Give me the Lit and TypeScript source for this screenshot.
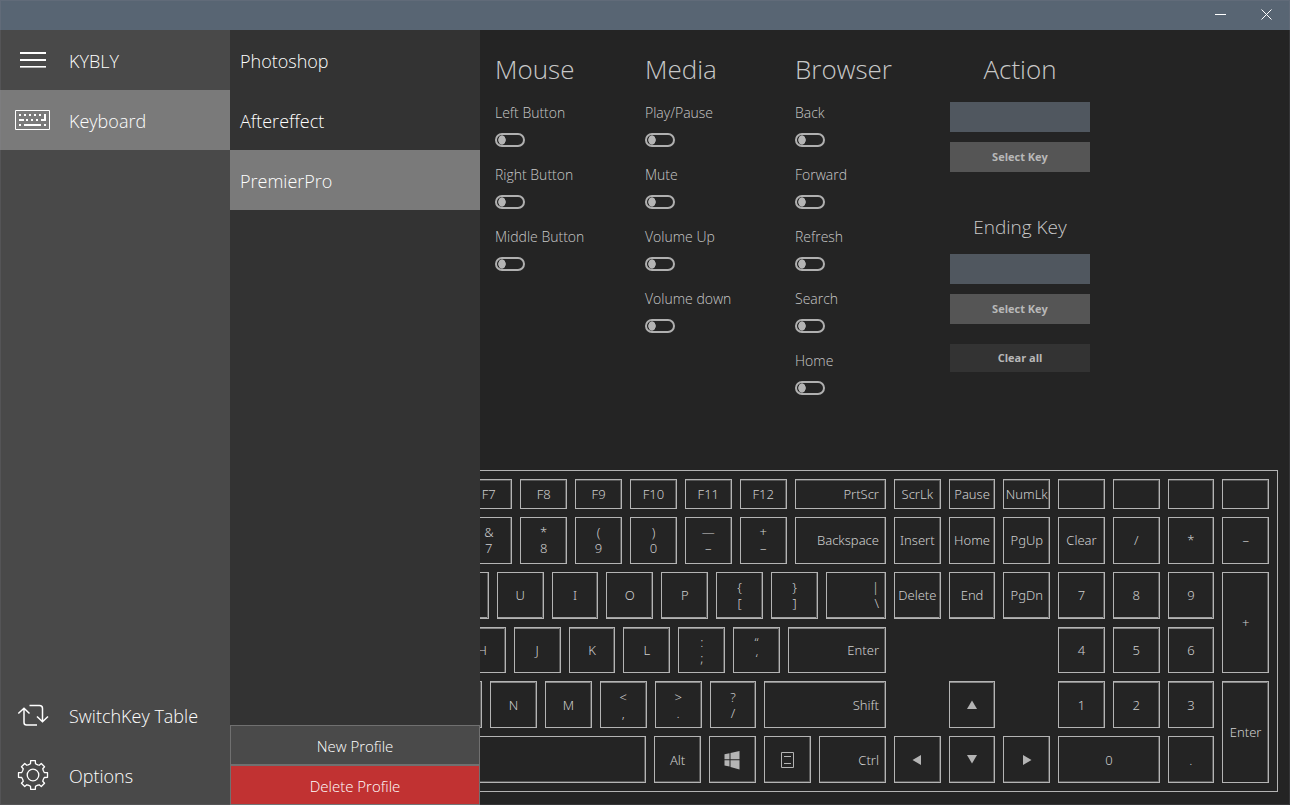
import { LitElement, html, css, svg, nothing, TemplateResult } from "lit";
import { customElement, property } from "lit/decorators.js";
import { classMap } from "lit/directives/class-map.js";
import { styleMap } from "lit/directives/style-map.js";

type Key = {
  id: string;
  top?: string;
  text?: string;
  icon?: TemplateResult;
  size?: number;
  end?: boolean;
};

const k = (text: string, size = 1, end = false): Key => ({ id: text, text, size, end });
const pair = (id: string, top: string, text: string, size = 1, end = false): Key => ({ id, top, text, size, end });
const blank = (id: string, size = 1): Key => ({ id, size });

const arrow = (points: string) => html`<svg width="12" height="12" viewBox="0 0 12 12" fill="currentColor" aria-hidden="true"><polygon points=${points} /></svg>`;
const UP = arrow("6,1.5 11,10 1,10");
const DOWN = arrow("1,1 11,1 6,9.5");
const LEFT = arrow("1.5,6 10,1 10,11");
const RIGHT = arrow("2,1 10.5,6 2,11");

const WINDOWS = html`<svg width="16" height="20" viewBox="0 0 16 20" fill="currentColor" aria-hidden="true">
  <path d="M0.500 4.300 5.500 3.200V9.300H0.500zM6.500 3 15.500 1V9.300H6.500zM0.500 10.300H5.500V16.500L0.500 15.500zM6.500 10.300H15.500V19.500L6.500 17z" />
</svg>`;
const MENU = html`<svg width="13" height="16" viewBox="0 0 13 16" fill="none" stroke="currentColor" aria-hidden="true">
  <path d="M.5 .5H12.500V15.500H.5zM3 4.500H10M3 11.500H10" />
</svg>`;

const MAIN_ROWS: { gap: number; keys: Key[] }[] = [
  { gap: 0.59, keys: [k("F7"), k("F8"), k("F9"), k("F10"), k("F11"), k("F12"), k("PrtScr", 1.81, true)] },
  {
    gap: 0.59,
    keys: [pair("7", "&", "7"), pair("8", "*", "8"), pair("9", "(", "9"), pair("0", ")", "0"), pair("minus", "—", "–"), pair("plus", "+", "–"), k("Backspace", 1.81, true)],
  },
  {
    gap: 0.16,
    keys: [blank("y"), k("U"), k("I"), k("O"), k("P"), pair("open", "{", "["), pair("close", "}", "]"), pair("slash", "|", "\\", 1.24, true)],
  },
  {
    gap: 0.47,
    keys: [k("H"), k("J"), k("K"), k("L"), pair("colon", ":", ";"), pair("quote", "“", "‘"), k("Enter", 1.93, true)],
  },
  {
    gap: 0.04,
    keys: [blank("b"), k("N"), k("M"), pair("comma", "<", ","), pair("dot", ">", "."), pair("question", "?", "/"), k("Shift", 2.36, true)],
  },
  {
    gap: 0,
    keys: [blank("space", 4.03), k("Alt"), { id: "windows", icon: WINDOWS }, { id: "menu", icon: MENU }, k("Ctrl", 1.37, true)],
  },
];

const SIDE_KEYS: [Key, string][] = [
  [k("ScrLk"), "f"], [k("Pause"), "f"], [k("NumLk"), "f"], [blank("x1"), "f"], [blank("x2"), "f"], [blank("x3"), "f"], [blank("x4"), "f"],
  [k("Insert"), ""], [k("Home"), ""], [k("PgUp"), ""], [k("Clear"), ""], [k("/"), ""], [k("*"), ""], [k("–"), ""],
  [k("Delete"), "low"], [k("End"), "low"], [k("PgDn"), "low"], [k("7"), "low"], [k("8"), "low"], [k("9"), "low"], [k("+"), "tall"],
  [k("4"), "from4 high"], [k("5"), "high"], [k("6"), "high"],
  [{ id: "up", icon: UP }, "from2 high"], [k("1"), "from4 high"], [k("2"), "high"], [k("3"), "high"], [k("Enter"), "tall high"],
  [{ id: "left", icon: LEFT }, "from1 base"], [{ id: "down", icon: DOWN }, "base"], [{ id: "right", icon: RIGHT }, "base"], [k("0"), "wide base"], [k("."), "base"],
];

const ROW_TONES = ["f", "", "low", "high", "high", "base"];

const columns = (row: { gap: number; keys: Key[] }) =>
  [row.gap, ...row.keys.map((key) => key.size ?? 1)].map((n) => `minmax(0, ${Math.round(n * 100)}fr)`).join(" ");

const palette = css`
  * { box-sizing: border-box; }
  button, input { font: inherit; color: inherit; margin: 0; border-radius: 0; }
`;

@customElement("key-board")
class KeyBoard extends LitElement {
  static styles = [palette, css`
    :host { display: block; color: #b4b4b4; font: 300 13px/16px "Noto Sans", sans-serif; }
    .board {
      display: grid;
      grid-template-columns: 1fr 383px;
      width: 854px;
      height: 322px;
      padding: 4px;
      border: 1px solid #b4b4b4;
    }
    .main, .side { display: grid; grid-template-rows: 38px repeat(5, 1fr); }
    .side { grid-template-columns: repeat(7, 1fr); }
    .row { display: grid; min-width: 0; }
    .cell { display: flex; min-width: 0; min-height: 0; padding: 4px; }
    .key {
      flex: 1;
      min-width: 0;
      display: flex;
      flex-direction: column;
      align-items: center;
      justify-content: center;
      padding: 0;
      background: transparent;
      border: 1px solid #b4b4b4;
      white-space: nowrap;
      --t: 0 0 transparent;
      box-shadow: inset -1px 0 #5c5c5c, inset var(--t);
    }
    .key span { color: #cfcfcf; }
    .key:hover { background: #333; }
    .f .key { --t: 0 1px #555; }
    .low .key { --t: 0 -1px #a0a0a0; }
    .high .key { --t: 0 1px #858585; }
    .base .key { --t: 0 -1px #555; }
    .key.end { align-items: flex-end; padding-right: 6px; }
    .from1 { grid-column-start: 1; }
    .from2 { grid-column-start: 2; }
    .from4 { grid-column-start: 4; }
    .wide { grid-column-end: span 2; }
    .tall { grid-row-end: span 2; grid-column: 7; }
    svg { display: block; }
  `];

  private key(key: Key) {
    return html`<button type="button" class=${classMap({ key: true, end: !!key.end })} aria-label=${key.id}>
      ${key.icon ?? nothing}${key.top ? html`<span>${key.top}</span>` : nothing}${key.text ? html`<span>${key.text}</span>` : nothing}
    </button>`;
  }

  render() {
    return html`<div class="board">
      <div class="main">
        ${MAIN_ROWS.map((row, i) => html`<div class="row ${ROW_TONES[i]}" style=${styleMap({ gridTemplateColumns: columns(row) })}>
          <span></span>
          ${row.keys.map((key) => html`<div class="cell">${this.key(key)}</div>`)}
        </div>`)}
      </div>
      <div class="side">
        ${SIDE_KEYS.map(([key, place]) => html`<div class="cell ${place}">${this.key(key)}</div>`)}
      </div>
    </div>`;
  }
}

@customElement("toggle-group")
class ToggleGroup extends LitElement {
  @property() heading = "";
  @property({ attribute: false }) items: string[] = [];

  static styles = [palette, css`
    :host { display: block; }
    h2 { margin: 0 0 12px; font-size: 26px; line-height: 38px; padding-bottom: 2px; font-weight: 300; }
    label { display: flex; flex-direction: column; gap: 9px; margin-bottom: 17px; font-size: 14px; line-height: 22px; }
    input {
      appearance: none;
      width: 30px;
      height: 14px;
      border: 2px solid #b0b0b0;
      border-radius: 7px;
      background: radial-gradient(ellipse 4px 5px at 5px 5px, #b4b4b4 85%, transparent 100%);
    }
    input:checked { background-position: 16px 0; background-repeat: no-repeat; }
  `];

  render() {
    return html`<h2>${this.heading}</h2>
      ${this.items.map((item) => html`<label>${item}<input type="checkbox" role="switch" /></label>`)}`;
  }
}

const gear = () => {
  const points: string[] = [];
  for (let i = 0; i < 8; i++) {
    const a = (i * Math.PI) / 4;
    const reach = i % 2 ? 14 : 14.5;
    for (const [x, y] of [[-3.8, -10.6], [-2.5, -11.3], [-2.3, -reach], [2.3, -reach], [2.5, -11.3], [3.8, -10.6]]) {
      points.push(`${(x * Math.cos(a) - y * Math.sin(a) + 15).toFixed(2)},${(x * Math.sin(a) + y * Math.cos(a) + 15).toFixed(2)}`);
    }
  }
  return svg`<polygon points=${points.join(" ")} /><circle cx="15" cy="15" r="5.800" />`;
};

@customElement("app-root")
class AppRoot extends LitElement {
  static styles = [palette, css`
    :host {
      display: flex;
      flex-direction: column;
      position: relative;
      height: 100vh;
      min-height: 780px;
      background: #242424;
      color: #fff;
      font: 300 18px/24px "Open Sans", "Noto Sans", sans-serif;
    }
    :host::after {
      content: "";
      position: absolute;
      inset: 0;
      border: 1px solid rgba(140, 140, 150, 0.18);
      pointer-events: none;
    }
    .titlebar { display: flex; justify-content: flex-end; height: 30px; background: #586573; }
    .titlebar button { width: 46px; padding: 0 1px 1px 0; border: 0; background: none; display: grid; place-items: center; }
    .body { flex: 1; display: flex; min-height: 0; }
    nav, .profiles { display: flex; flex-direction: column; flex: none; }
    nav { width: 230px; background: #494949; }
    .item {
      display: flex;
      align-items: center;
      height: 60px;
      padding: 2px 0 0;
      border: 0;
      background: none;
      text-align: left;
      font-weight: 300;
    }
    .item svg { margin: -2px 18px 0 15px; width: 36px; flex: none; }
    .selected { background: #7a7a7a; }
    .push { margin-top: auto; }
    .profiles { width: 250px; background: #333; }
    .profiles .item { padding-left: 10px; }
    .wide-button { height: 40px; padding: 1px 0 0; border: 1px solid #707070; background: #4a4a4a; font-size: 15px; line-height: 20px; }
    .danger { background: #c13232; }
    main { flex: 1; min-width: 0; display: flex; flex-direction: column; overflow: hidden; color: #c8c8c8; }
    .groups { display: grid; grid-template-columns: repeat(4, 150px); padding: 20px 15px 0; }
    .action { display: flex; flex-direction: column; padding: 0 5px; text-align: center; }
    h2, h3 { margin: 0; font-weight: 300; }
    h2 { font-size: 26px; line-height: 38px; padding-bottom: 2px; margin-bottom: 12px; }
    h3 { font-size: 19px; line-height: 30px; margin: 40px 0 12px; }
    .field { width: 100%; height: 30px; border: 0; background: #50575f; margin-bottom: 10px; padding: 0 8px; }
    .small { height: 30px; padding: 0; border: 0; background: #555; color: #b8b8b8; font-size: 11px; line-height: 16px; font-weight: 700; }
    .clear { height: 28px; margin-top: 20px; background: #333; }
    .keys { display: flex; justify-content: flex-end; margin-top: auto; padding: 0 12px 13px 0; }
    key-board { flex: none; }
  `];

  render() {
    return html`
      <header class="titlebar">
        <button type="button" aria-label="Minimize"><svg width="11" height="11" fill="none" stroke="#fff"><path d="M0 5.500H11" /></svg></button>
        <button type="button" aria-label="Close"><svg width="11" height="11" fill="none" stroke="#fff"><path d="M.5 .5 10.500 10.500M10.500 .5 .5 10.500" /></svg></button>
      </header>
      <div class="body">
        <nav>
          <button type="button" class="item">
            <svg width="36" height="20" fill="#fff" aria-hidden="true"><path d="M5 2h26v2H5zM5 9h26v2H5zM5 16h26v1H5z" /><path d="M5 17h26v1H5z" opacity=".6" /></svg>KYBLY
          </button>
          <button type="button" class="item selected">
            <svg width="36" height="20" fill="#fff" aria-hidden="true">
              <path d="M.5 .5H34.500V19.500H.5z" fill="none" stroke="#fff" />
              <path d="M4 4h2v2H4zM9 4h2v2H9zM14 4h2v2h-2zM19 4h2v2h-2zM24 4h2v2h-2zM29 4h2v7h-5V9h3zM4 9h5v2H4zM11 9h2v2h-2zM16 9h2v2h-2zM21 9h2v2h-2zM4 14h2v2H4zM9 14h17v2H9zM29 14h2v2h-2z" />
            </svg>Keyboard
          </button>
          <button type="button" class="item push">
            <svg width="36" height="22" fill="none" stroke="#fff" stroke-width="1.500" aria-hidden="true">
              <path d="M3.300 9.500 9 4.200 14.500 9.500M9 4.500V18.500Q9 21 11.500 21H22M14.500 1.500H24.500Q27.500 1.500 27.500 4.500V17.500M22 12.500 27.500 17.800 33 12.500" />
            </svg>SwitchKey Table
          </button>
          <button type="button" class="item">
            <svg width="36" height="30" viewBox="-3 0 36 30" fill="none" stroke="#fff" stroke-width="1.300" stroke-linejoin="round" aria-hidden="true">${gear()}</svg>Options
          </button>
        </nav>
        <section class="profiles" aria-label="Profiles">
          <button type="button" class="item">Photoshop</button>
          <button type="button" class="item">Aftereffect</button>
          <button type="button" class="item selected">PremierPro</button>
          <button type="button" class="wide-button push">New Profile</button>
          <button type="button" class="wide-button danger">Delete Profile</button>
        </section>
        <main>
          <div class="groups">
            <toggle-group heading="Mouse" .items=${["Left Button", "Right Button", "Middle Button"]}></toggle-group>
            <toggle-group heading="Media" .items=${["Play/Pause", "Mute", "Volume Up", "Volume down"]}></toggle-group>
            <toggle-group heading="Browser" .items=${["Back", "Forward", "Refresh", "Search", "Home"]}></toggle-group>
            <div class="action">
              <h2 id="action">Action</h2>
              <input class="field" type="text" aria-labelledby="action" />
              <button type="button" class="small">Select Key</button>
              <h3 id="ending">Ending Key</h3>
              <input class="field" type="text" aria-labelledby="ending" />
              <button type="button" class="small">Select Key</button>
              <button type="button" class="small clear">Clear all</button>
            </div>
          </div>
          <div class="keys"><key-board></key-board></div>
        </main>
      </div>`;
  }
}
